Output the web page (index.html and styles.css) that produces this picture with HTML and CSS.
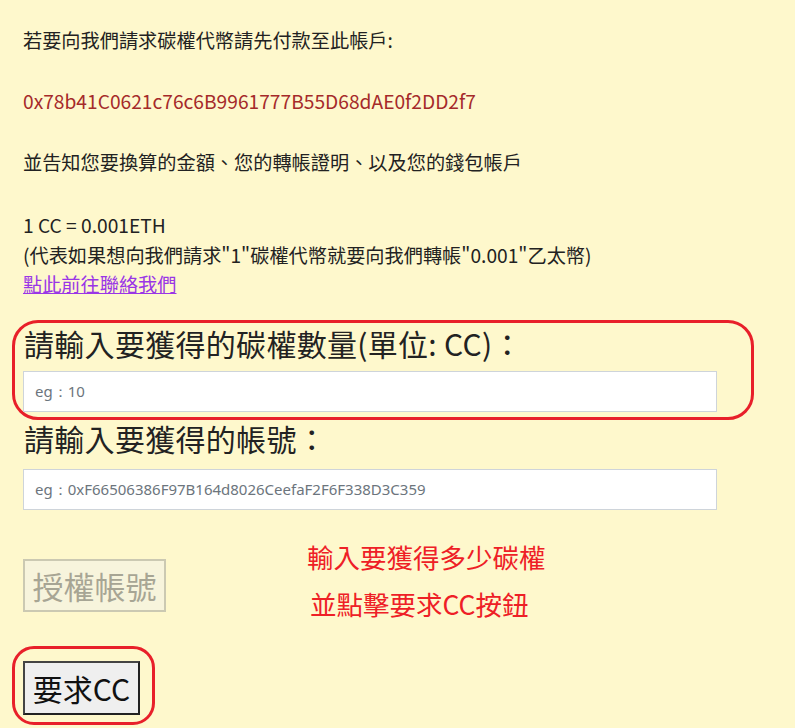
FILE: index.html
```html
<!DOCTYPE html>
<html lang="zh-Hant">
<head>
<meta charset="utf-8">
<title>請求碳權代幣</title>
<link rel="stylesheet" href="styles.css">
</head>
<body>
<main class="page">
  <p class="line first">若要向我們請求碳權代幣請先付款至此帳戶:</p>
  <p class="line address">0x78b41C0621c76c6B9961777B55D68dAE0f2DD2f7</p>
  <p class="line">並告知您要換算的金額、您的轉帳證明、以及您的錢包帳戶</p>
  <div class="rate">
    <div class="line">1 CC = 0.001ETH</div>
    <div class="line">(代表如果想向我們請求"1"碳權代幣就要向我們轉帳"0.001"乙太幣)</div>
    <a class="line link" href="#">點此前往聯絡我們</a>
  </div>

  <div class="mark mark-amount">
    <h2 class="label">請輸入要獲得的碳權數量(單位: CC)：</h2>
    <input class="field" type="text" placeholder="eg：10">
  </div>

  <h2 class="label">請輸入要獲得的帳號：</h2>
  <input class="field field-gap" type="text" placeholder="eg：0xF66506386F97B164d8026CeefaF2F6F338D3C359">

  <div class="action-row">
    <button class="btn-auth" type="button" disabled>授權帳號</button>
    <div class="hint">
      <div class="hint-line">輸入要獲得多少碳權</div>
      <div class="hint-line second">並點擊要求CC按鈕</div>
    </div>
  </div>

  <div class="mark mark-btn">
    <button class="btn-cc" type="button">要求CC</button>
  </div>
</main>
</body>
</html>
```
FILE: styles.css
```css
html, body {
  margin: 0;
  padding: 0;
  background: #fef8cc;
}
body {
  font-family: "Noto Sans CJK TC", "Noto Sans", sans-serif;
  color: #222;
  width: 795px;
  height: 728px;
  overflow: hidden;
}
.page {
  padding: 25px 0 0 12px;
}
.line {
  display: block;
  margin: 0 0 0 11px;
  font-size: 19.2px;
  line-height: 30px;
}
p.line {
  margin-bottom: 31px;
}
.address {
  color: #a52a2a;
}
.rate {
  margin-top: 34px;
}
.rate .line {
  line-height: 29.5px;
}
.link {
  color: #9a36e6;
  text-decoration: underline;
  width: fit-content;
}
.mark {
  border: 3px solid #e8202a;
  box-sizing: border-box;
}
.mark-amount {
  margin-top: 20px;
  width: 742px;
  height: 100px;
  border-radius: 26px;
  padding: 2px 0 0 8px;
}
.label {
  margin: 0 0 0 12px;
  font-weight: normal;
  font-size: 30px;
  line-height: 36px;
  color: #222;
  letter-spacing: 0.3px;
}
.mark-amount .label {
  margin-left: 1px;
}
.field {
  display: block;
  box-sizing: border-box;
  width: 694px;
  height: 41px;
  margin: 10px 0 0 0;
  padding: 0 11px;
  border: 1px solid #ced4da;
  border-radius: 0;
  background: #fff;
  font-family: "Noto Sans", sans-serif;
  font-size: 15px;
  color: #222;
  outline: none;
}
.field::placeholder {
  color: #6c757d;
}
.field-gap {
  margin: 13px 0 0 11px;
}
.action-row {
  display: flex;
  align-items: flex-start;
  margin: 23px 0 0 11px;
  height: 94px;
}
.btn-auth {
  margin-top: 26px;
  width: 143px;
  height: 53px;
  padding: 0;
  border: 2px solid #cbc9b2;
  background: #f7f4dc;
  color: #a7a594;
  font-family: "Noto Sans CJK TC", sans-serif;
  font-size: 31px;
  line-height: 1;
}
.hint {
  margin-left: 141px;
  color: #ee2026;
  font-size: 26.5px;
  line-height: 47px;
}
.hint-line.second {
  margin-left: 3px;
}
.mark-btn {
  margin-top: 19px;
  width: 143px;
  height: 79px;
  border-radius: 22px;
  padding: 12px 0 0 8px;
}
.btn-cc {
  width: 117px;
  height: 54px;
  padding: 0;
  border: 2px solid #222;
  border-top-color: #444;
  border-left-color: #444;
  background: #efefef;
  color: #111;
  font-family: "Noto Sans CJK TC", sans-serif;
  font-size: 30px;
  line-height: 1;
}
```
